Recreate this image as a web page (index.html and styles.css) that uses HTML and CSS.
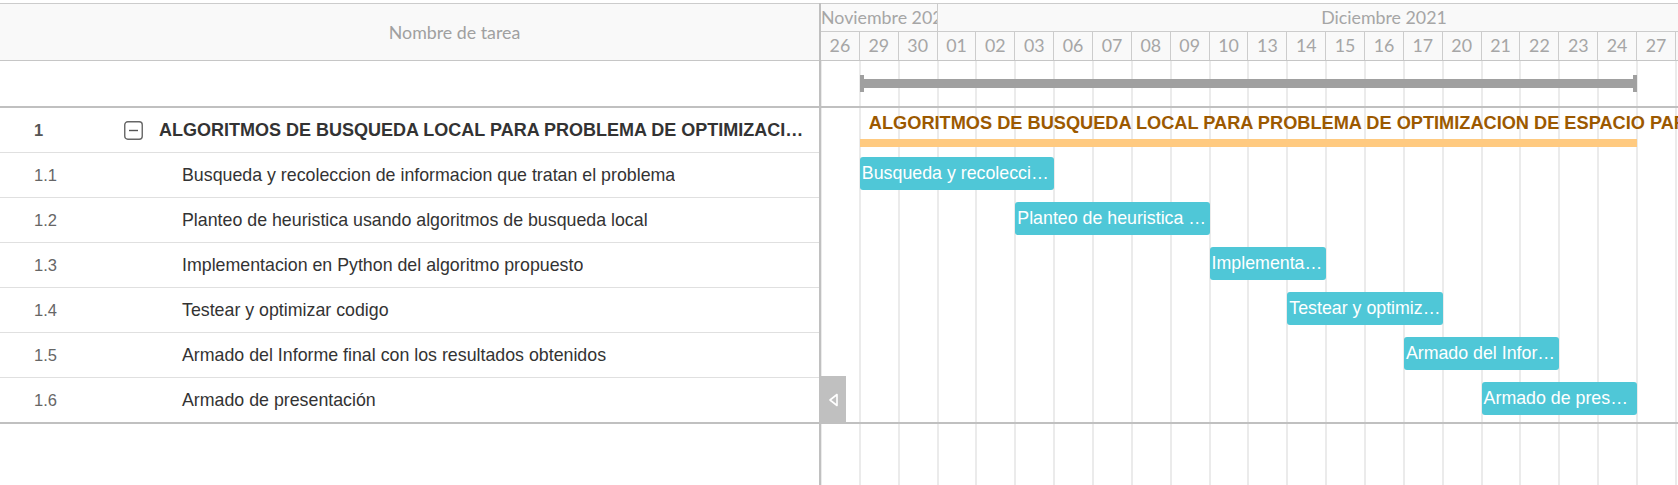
FILE: index.html
```html
<!DOCTYPE html>
<html lang="es">
<head>
<meta charset="utf-8">
<title>Gantt</title>
<link rel="stylesheet" href="styles.css">
</head>
<body>
<div class="gantt">
  <div class="grid">
    <div class="grid-header">
      <div class="col-id"></div>
      <div class="col-name">Nombre de tarea</div>
    </div>
    <div class="grid-summary"></div>
    <div class="grid-row parent">
      <div class="col-id">1</div>
      <div class="col-name">
        <svg class="toggle" width="19" height="19" viewBox="0 0 19 19"><rect x="0.75" y="0.75" width="17.5" height="17.5" rx="3" fill="none" stroke="#666" stroke-width="1.4"/><line x1="5" y1="9.5" x2="14" y2="9.5" stroke="#555" stroke-width="1.4"/></svg>
        <span class="name">ALGORITMOS DE BUSQUEDA LOCAL PARA PROBLEMA DE OPTIMIZACION DE ESPACIO PARA FIGURAS</span>
      </div>
    </div>
    <div class="grid-row child">
      <div class="col-id">1.1</div>
      <div class="col-name"><span class="name">Busqueda y recoleccion de informacion que tratan el problema</span></div>
    </div>
    <div class="grid-row child">
      <div class="col-id">1.2</div>
      <div class="col-name"><span class="name">Planteo de heuristica usando algoritmos de busqueda local</span></div>
    </div>
    <div class="grid-row child">
      <div class="col-id">1.3</div>
      <div class="col-name"><span class="name">Implementacion en Python del algoritmo propuesto</span></div>
    </div>
    <div class="grid-row child">
      <div class="col-id">1.4</div>
      <div class="col-name"><span class="name">Testear y optimizar codigo</span></div>
    </div>
    <div class="grid-row child">
      <div class="col-id">1.5</div>
      <div class="col-name"><span class="name">Armado del Informe final con los resultados obtenidos</span></div>
    </div>
    <div class="grid-row child last">
      <div class="col-id">1.6</div>
      <div class="col-name"><span class="name">Armado de presentación</span></div>
    </div>
  </div>

  <div class="splitter">
    <div class="splitter-handle">
      <svg width="11" height="14" viewBox="0 0 11 14"><polygon points="9,1.5 2,7 9,12.5" fill="none" stroke="#fff" stroke-width="1.6" stroke-linejoin="round"/></svg>
    </div>
  </div>

  <div class="timeline">
    <div class="tl-header">
      <div class="months">
        <div class="month nov">Noviembre 2021</div>
        <div class="month dec">Diciembre 2021</div>
      </div>
      <div class="days">
        <div class="day">26</div><div class="day">29</div><div class="day">30</div>
        <div class="day">01</div><div class="day">02</div><div class="day">03</div>
        <div class="day">06</div><div class="day">07</div><div class="day">08</div>
        <div class="day">09</div><div class="day">10</div><div class="day">13</div>
        <div class="day">14</div><div class="day">15</div><div class="day">16</div>
        <div class="day">17</div><div class="day">20</div><div class="day">21</div>
        <div class="day">22</div><div class="day">23</div><div class="day">24</div>
        <div class="day">27</div><div class="day">28</div><div class="day">29</div>
        <div class="day">30</div><div class="day">31</div>
      </div>
    </div>
    <div class="tl-body">
      <div class="tl-row tl-summary">
        <div class="sum-bar c2-22"><span class="cap"></span><span class="line"></span><span class="cap"></span></div>
      </div>
      <div class="tl-row tl-parent">
        <div class="parent-cell c2-22">
          <div class="parent-label">ALGORITMOS DE BUSQUEDA LOCAL PARA PROBLEMA DE OPTIMIZACION DE ESPACIO PARA FIGURAS</div>
          <div class="parent-bar"></div>
        </div>
      </div>
      <div class="tl-row tl-task"><div class="bar c2-7">Busqueda y recoleccion de informacion que tratan el problema</div></div>
      <div class="tl-row tl-task"><div class="bar c6-11">Planteo de heuristica usando algoritmos de busqueda local</div></div>
      <div class="tl-row tl-task"><div class="bar c11-14">Implementacion en Python del algoritmo propuesto</div></div>
      <div class="tl-row tl-task"><div class="bar c13-17">Testear y optimizar codigo</div></div>
      <div class="tl-row tl-task"><div class="bar c16-20">Armado del Informe final con los resultados obtenidos</div></div>
      <div class="tl-row tl-task last"><div class="bar c18-22">Armado de presentación</div></div>
    </div>
  </div>
</div>
</body>
</html>
```
FILE: styles.css
```css
* { box-sizing: border-box; }

html, body {
  margin: 0;
  background: #fff;
}

body {
  font-family: "Liberation Sans", Arial, sans-serif;
  color: #333;
}

.gantt {
  display: flex;
  width: 1678px;
  height: 485px;
  padding-top: 3px;
  overflow: hidden;
  position: relative;
}

/* ---------- left grid ---------- */
.grid {
  width: 819px;
  flex: none;
}

.col-id {
  width: 90px;
  flex: none;
  padding-left: 34px;
  font-size: 16.5px;
  color: #666;
}

.col-name {
  flex: 1;
  min-width: 0;
  display: flex;
  align-items: center;
  padding-right: 14px;
}

.grid-header {
  display: flex;
  height: 58px;
  border-top: 1px solid #cccccc;
  border-bottom: 1px solid #c6c6c6;
  background: #f9f9f9;
}

.grid-header .col-name {
  justify-content: center;
  padding-right: 0;
  font-family: Lato, "Liberation Sans", sans-serif;
  font-size: 17.8px;
  color: #a0a0a0;
}

.grid-summary {
  height: 47px;
  border-bottom: 2px solid #c0c0c0;
}

.grid-row {
  display: flex;
  align-items: center;
  height: 45px;
  border-bottom: 1px solid #e0e0e0;
}

.grid-row.last {
  height: 46px;
  border-bottom: 2px solid #c0c0c0;
}

.name {
  white-space: nowrap;
  overflow: hidden;
  text-overflow: ellipsis;
  min-width: 0;
}

.grid-row.parent .col-id {
  font-weight: bold;
  color: #555;
}

.grid-row.parent .toggle {
  flex: none;
  margin-left: 34px;
  margin-right: 16px;
}

.grid-row.parent .name {
  font-size: 18px;
  font-weight: bold;
  color: #333;
}

.grid-row.child .name {
  padding-left: 92px;
  font-size: 17.8px;
  color: #333;
}

/* ---------- splitter ---------- */
.splitter {
  width: 2px;
  flex: none;
  background: #c0c0c0;
  position: relative;
  z-index: 2;
}

.splitter-handle {
  position: absolute;
  left: 1px;
  top: 373px;
  width: 26px;
  height: 48px;
  background: #c0c0c0;
  display: flex;
  align-items: center;
  justify-content: center;
}

/* ---------- timeline ---------- */
.timeline {
  flex: 1;
  min-width: 0;
  overflow: hidden;
  font-family: Lato, "Liberation Sans", sans-serif;
}

.tl-header,
.tl-body {
  width: 1010.36px;
}

.tl-header {
  height: 58px;
  border-top: 1px solid #cccccc;
  border-bottom: 1px solid #c6c6c6;
  background: #f9f9f9;
  color: #a6a6a6;
  font-size: 17.8px;
}

.months,
.days,
.tl-row {
  display: grid;
  grid-template-columns: repeat(26, 38.86px);
}

.months {
  height: 28px;
  border-bottom: 1px solid #cccccc;
}

.days {
  height: 28px;
}

.month {
  overflow: hidden;
  white-space: nowrap;
  text-align: center;
  line-height: 27px;
  border-right: 1px solid #cccccc;
}

.month.nov { grid-column: 1 / 4; }
.month.dec { grid-column: 4 / 27; }

.day {
  text-align: center;
  line-height: 27px;
  border-right: 1px solid #cccccc;
}

.tl-body {
  height: 424px;
  background-image: repeating-linear-gradient(90deg,
    #ebebeb 0 1px,
    transparent 1px 37.86px,
    #ebebeb 37.86px 38.86px);
}

.tl-row {
  height: 45px;
  border-bottom: 1px solid transparent;
}

.tl-summary {
  height: 47px;
  border-bottom: 2px solid #c0c0c0;
  align-items: center;
}

.tl-row.last {
  height: 46px;
  border-bottom: 2px solid #c0c0c0;
}

.c2-22 { grid-column: 2 / 22; }
.c2-7 { grid-column: 2 / 7; }
.c6-11 { grid-column: 6 / 11; }
.c11-14 { grid-column: 11 / 14; }
.c13-17 { grid-column: 13 / 17; }
.c16-20 { grid-column: 16 / 20; }
.c18-22 { grid-column: 18 / 22; }

.sum-bar {
  display: flex;
  align-items: center;
  height: 17px;
}

.sum-bar .cap {
  width: 4px;
  height: 17px;
  background: #a0a0a0;
  flex: none;
}

.sum-bar .line {
  flex: 1;
  height: 9px;
  background: #a0a0a0;
}

.parent-cell {
  display: flex;
  flex-direction: column;
  justify-content: flex-end;
  padding-bottom: 5px;
  min-width: 0;
}

.parent-label {
  padding-left: 9px;
  margin-bottom: 5px;
  white-space: nowrap;
  font-family: "Liberation Sans", Arial, sans-serif;
  font-weight: bold;
  font-size: 18.2px;
  line-height: 21px;
  color: #9c5900;
}

.parent-bar {
  height: 8px;
  background: #ffca80;
}

.tl-task {
  align-items: start;
  padding-top: 4px;
}

.bar {
  height: 33px;
  line-height: 33px;
  padding: 0 2px;
  border-radius: 3px;
  background: #4fc7d7;
  color: #fff;
  font-family: "Liberation Sans", Arial, sans-serif;
  font-size: 17.8px;
  white-space: nowrap;
  overflow: hidden;
  text-overflow: ellipsis;
}
```
